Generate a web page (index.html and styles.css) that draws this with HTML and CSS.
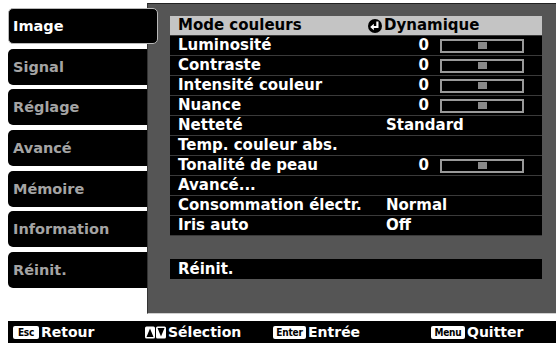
FILE: index.html
```html
<!DOCTYPE html>
<html lang="fr">
<head>
<meta charset="utf-8">
<title>Image</title>
<link rel="stylesheet" href="styles.css">
</head>
<body>
<div class="screen">
  <div class="main">
    <nav class="tabs">
      <div class="tab active">Image</div>
      <div class="tab">Signal</div>
      <div class="tab">Réglage</div>
      <div class="tab">Avancé</div>
      <div class="tab">Mémoire</div>
      <div class="tab">Information</div>
      <div class="tab">Réinit.</div>
    </nav>
    <section class="panel">
      <div class="list">
        <div class="row sel"><span class="lbl">Mode couleurs</span><span class="val icon-val"><svg class="enter-ic" width="14" height="14" viewBox="0 0 14 14"><circle cx="7" cy="7" r="7" fill="#000"/><path d="M9.4 2.6 V8 H5" fill="none" stroke="#fff" stroke-width="2.2"/><polygon points="2.2,8 5.8,4.8 5.8,11.2" fill="#fff"/></svg>Dynamique</span></div>
        <div class="row"><span class="lbl">Luminosité</span><span class="val"><span class="num">0</span><span class="slider"><span class="thumb"></span></span></span></div>
        <div class="row"><span class="lbl">Contraste</span><span class="val"><span class="num">0</span><span class="slider"><span class="thumb"></span></span></span></div>
        <div class="row"><span class="lbl">Intensité couleur</span><span class="val"><span class="num">0</span><span class="slider"><span class="thumb"></span></span></span></div>
        <div class="row"><span class="lbl">Nuance</span><span class="val"><span class="num">0</span><span class="slider"><span class="thumb"></span></span></span></div>
        <div class="row"><span class="lbl">Netteté</span><span class="val">Standard</span></div>
        <div class="row"><span class="lbl">Temp. couleur abs.</span><span class="val"></span></div>
        <div class="row"><span class="lbl">Tonalité de peau</span><span class="val"><span class="num">0</span><span class="slider"><span class="thumb"></span></span></span></div>
        <div class="row"><span class="lbl">Avancé...</span><span class="val"></span></div>
        <div class="row"><span class="lbl">Consommation électr.</span><span class="val">Normal</span></div>
        <div class="row"><span class="lbl">Iris auto</span><span class="val">Off</span></div>
      </div>
      <div class="list reset">
        <div class="row last"><span class="lbl">Réinit.</span><span class="val"></span></div>
      </div>
    </section>
  </div>
  <footer class="bar">
    <div class="item"><span class="key k-esc">Esc</span><span class="txt">Retour</span></div>
    <div class="item"><svg class="k-arrows" width="21" height="13" viewBox="0 0 21 13"><rect x="0" y="0.5" width="10" height="12" rx="1.5" fill="#fff"/><rect x="11" y="0.5" width="10" height="12" rx="1.5" fill="#fff"/><polygon points="1.5,11 8.5,11 5,2.5" fill="#000"/><polygon points="12.5,2 19.5,2 16,10.5" fill="#000"/></svg><span class="txt">Sélection</span></div>
    <div class="item"><span class="key k-enter">Enter</span><span class="txt">Entrée</span></div>
    <div class="item"><span class="key k-menu">Menu</span><span class="txt">Quitter</span></div>
  </footer>
</div>
</body>
</html>
```

FILE: styles.css
```css
* { box-sizing: border-box; }

body {
  margin: 0;
  background: #fff;
  font-family: "DejaVu Sans", "Liberation Sans", sans-serif;
}

.screen {
  width: 556px;
  height: 343px;
  display: flex;
  flex-direction: column;
  overflow: hidden;
}

.main {
  display: flex;
  align-items: flex-start;
  height: 314px;
}

.tabs {
  margin: 8px 0 0 8px;
  width: 139px;
  flex: none;
  display: flex;
  flex-direction: column;
  gap: 4.67px;
}

.tab {
  height: 36px;
  background: #000;
  border-radius: 5px 0 0 5px;
  color: #a4a4a4;
  font-weight: bold;
  font-size: 14.5px;
  line-height: 36px;
  padding-left: 5px;
}

.tab.active {
  color: #fff;
  margin-right: -11px;
  border: 1px solid #b8b8b8;
  border-radius: 5px;
  line-height: 34px;
  padding-left: 4px;
  position: relative;
  z-index: 1;
}

.panel {
  margin-top: 3px;
  flex: 1;
  height: 311px;
  background: #555;
  border-top: 1px solid #222;
  border-left: 1px solid #333;
  border-bottom: 1px solid #cfcfcf;
  padding: 12px 14px 0 22px;
}

.row {
  height: 20px;
  border-bottom: 1px solid #3a3a3a;
  background: #000;
  color: #fff;
  display: grid;
  grid-template-columns: 190px 1fr;
  align-items: center;
  font-weight: bold;
  font-size: 15px;
  line-height: 19px;
  padding-left: 8px;
  white-space: nowrap;
}

.row.sel {
  background: #c4c4c4;
  color: #000;
}

.row.last {
  border-bottom: none;
}

.val {
  display: flex;
  align-items: center;
  height: 19px;
  padding-left: 18px;
}

.val.icon-val {
  padding-left: 0;
}

.enter-ic {
  margin-right: 2px;
  flex: none;
}

.num {
  width: 43px;
  text-align: right;
}

.slider {
  margin-left: 11px;
  width: 84px;
  height: 14px;
  border: 2px solid #999;
  background: #000;
  display: flex;
  align-items: center;
  justify-content: center;
}

.thumb {
  width: 9px;
  height: 7px;
  background: #8a8a8a;
}

.reset {
  margin-top: 23px;
}

.bar {
  margin: 7px 0 0 8px;
  height: 22px;
  background: #000;
  display: grid;
  grid-template-columns: 132px 128px 158px 1fr;
  padding-left: 5px;
  align-items: center;
  color: #fff;
}

.item {
  display: flex;
  align-items: center;
}

.key {
  display: inline-flex;
  align-items: center;
  justify-content: center;
  height: 13px;
  background: #fff;
  color: #000;
  border-radius: 2px;
  font-family: "DejaVu Sans Condensed", "DejaVu Sans", sans-serif;
  font-stretch: condensed;
  font-weight: bold;
  font-size: 10px;
  letter-spacing: -0.2px;
}

.k-esc { width: 26px; }
.k-enter { width: 33px; }
.k-menu { width: 34px; }

.k-arrows { flex: none; }

.txt {
  margin-left: 2px;
  font-weight: bold;
  font-size: 14px;
}
```
